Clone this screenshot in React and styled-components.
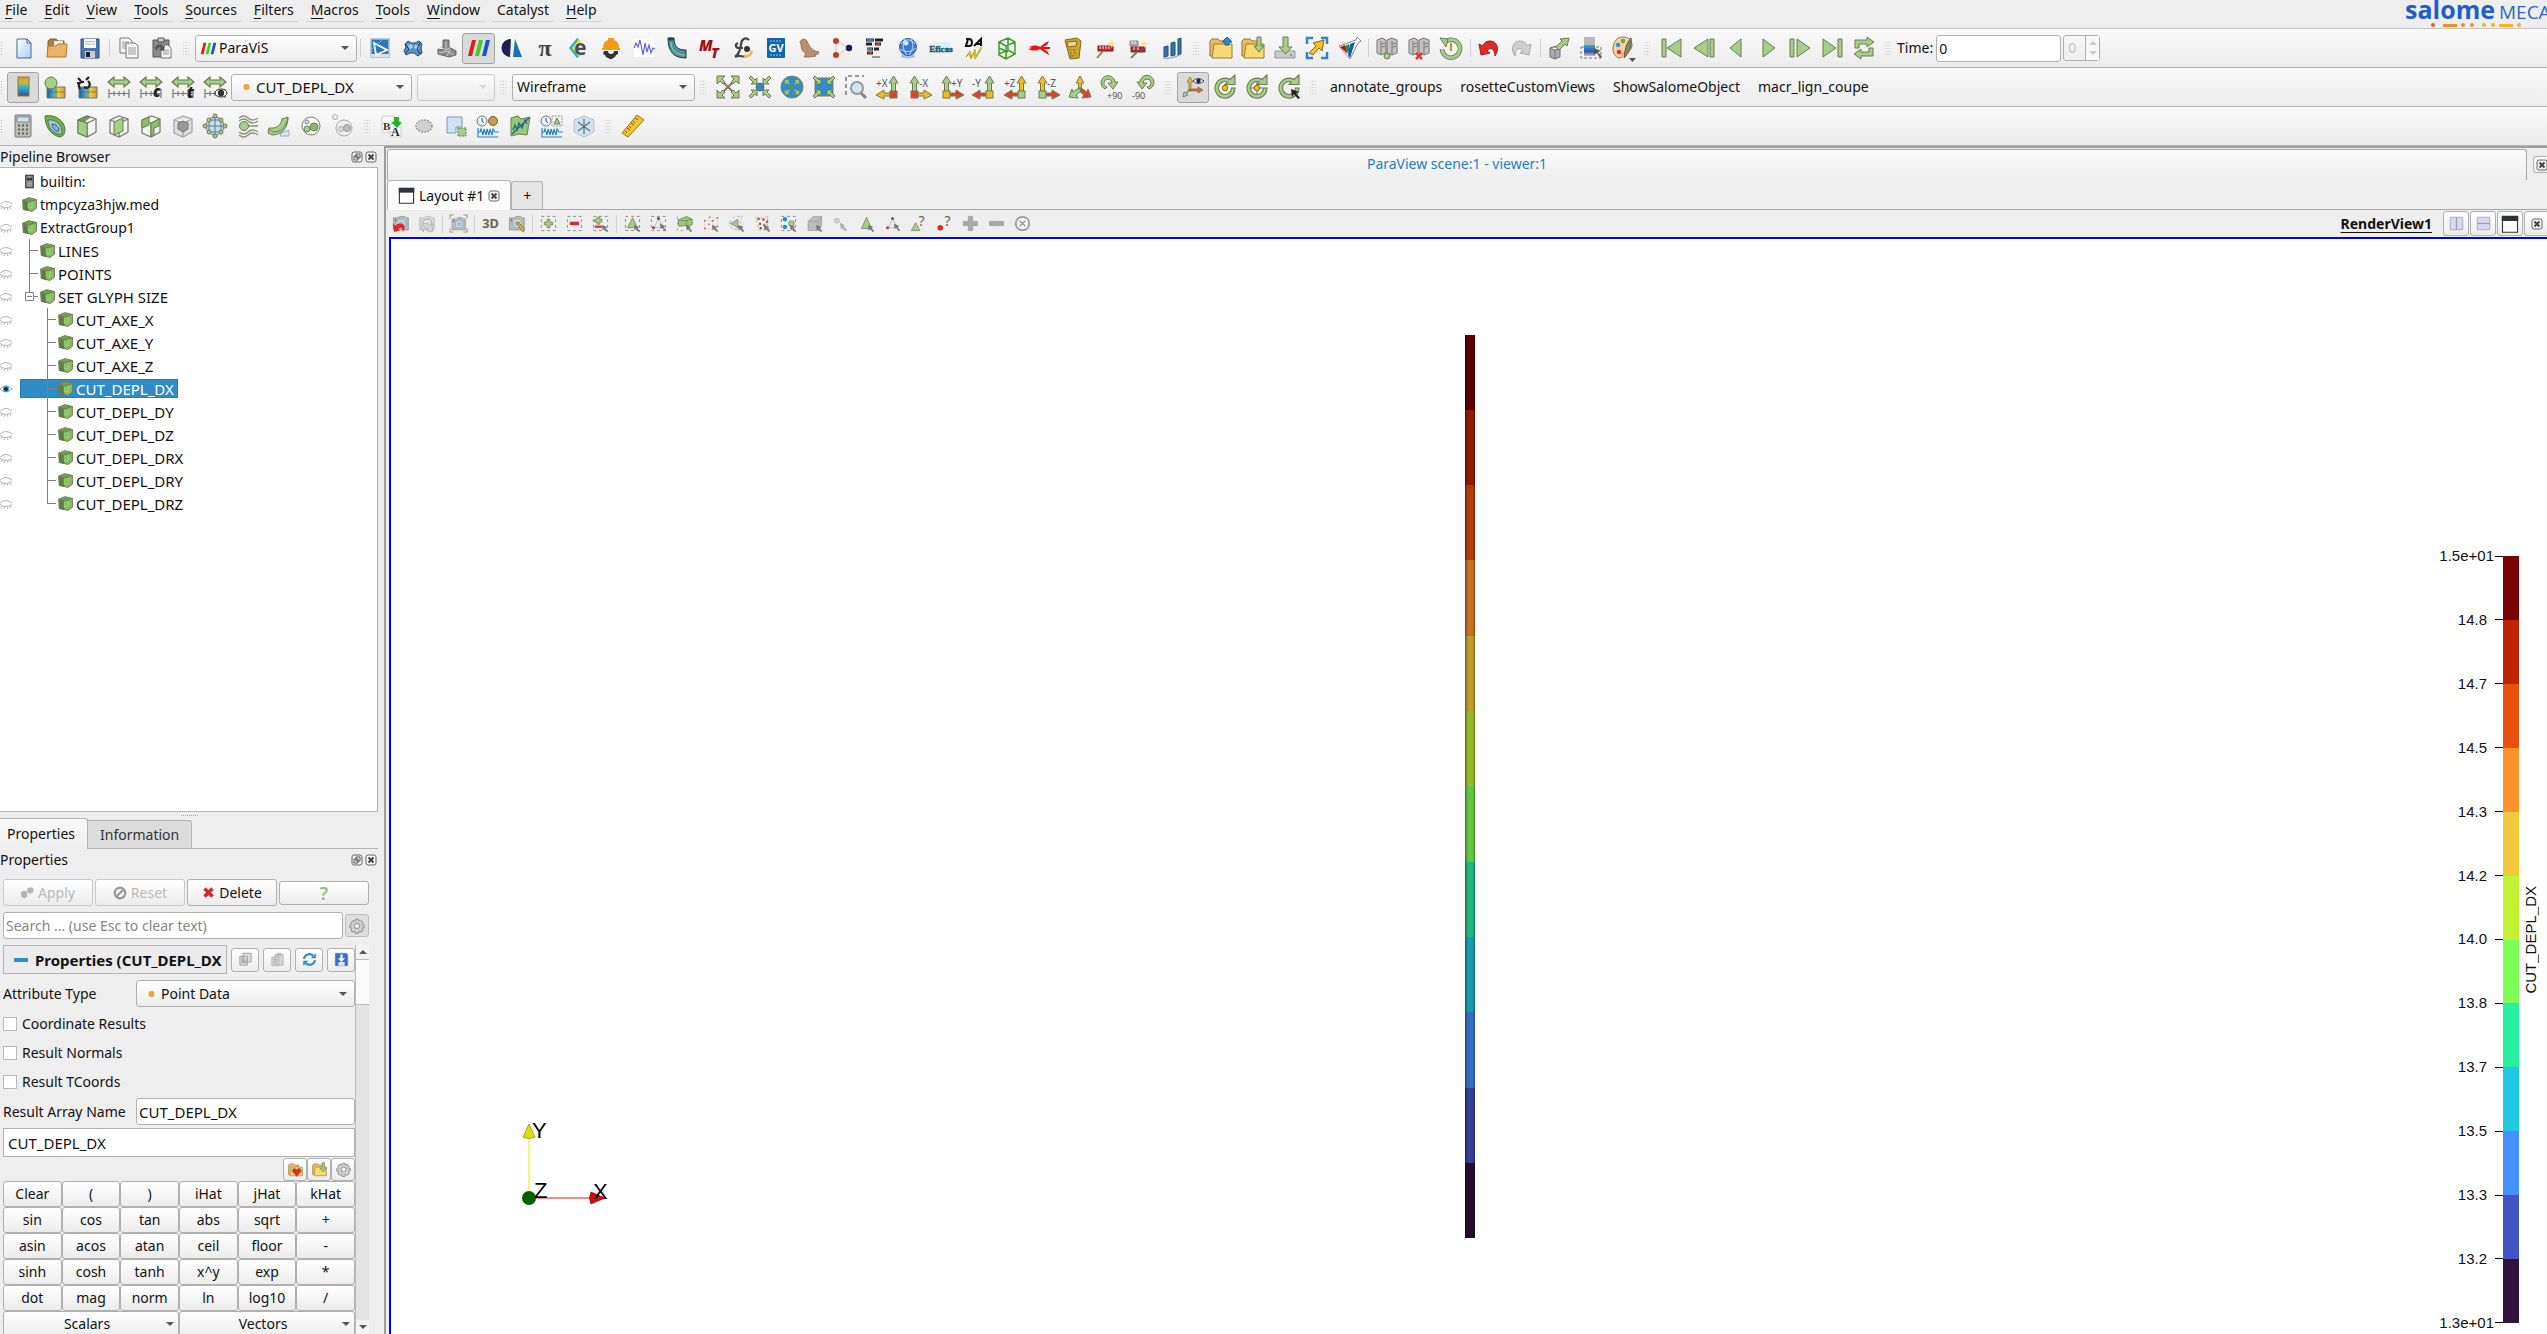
import { useState } from "react"
import styled, { createGlobalStyle, css } from "styled-components"

const GREEN = "#a3cf87"
const EDGE = "#6f7a55"
const FONT = '"Noto Sans", "Open Sans", sans-serif'

const GlobalStyle = createGlobalStyle`
  * {
    box-sizing: border-box;
  }

  body {
    margin: 0;
    background: #eeeeee;
    color: #111111;
    font: 14px/20px ${FONT};
  }

  button, input, select {
    font: inherit;
    color: inherit;
    margin: 0;
  }
`

/* ---------- drawings ---------- */

const Svg = styled.svg`
  display: block;
  flex: none;
  overflow: visible;
`

const Defs = styled.svg`
  position: absolute;
  width: 0;
  height: 0;
`

const Dashes = () => <rect x="2" y="2" width="20" height="20" fill="none" stroke="#8c8c8c" strokeWidth="1.4" strokeDasharray="4 4" />
const Pointer = () => <path d="M14 14l8 3-3 1 4 5-2 1-4-4-2 2z" fill="#777" />
const Folder = () => (
  <>
    <path d="M1 5l2-2h6l2 2h6v15H1z" fill="#eebb62" stroke="#94703a" />
    <path d="M5 8h18v14H3z" fill="#f5d971" stroke="#94803a" />
  </>
)
const Camera = ({ grey }) => (
  <>
    <path d="M2 4h7l2-2h7l2 2h3v17H2z" fill={grey ? "#d6d6d6" : "#b9bcbc"} stroke={grey ? "#bbb" : "#858989"} />
    <circle cx="13" cy="12" r="6" fill="#eee" stroke="#8f9494" />
    <circle cx="13" cy="12" r="4" fill={grey ? "#e2e2e2" : "#8fc6e8"} />
    <rect x="4" y="6" width="2" height="3" fill={grey ? "#ccc" : "#d8443c"} />
  </>
)
const Servers = () => (
  <>
    <path d="M2 4l5-2 4 2v13l-5 2-4-2z" fill="#c6c0c0" stroke="#777" />
    <path d="M12 4l5-2 5 2v13l-5 2-5-2z" fill="#c6c0c0" stroke="#777" />
    <path d="M6 5v13M17 5v13M7 8l3-1M7 11l3-1M18 8l3-1M18 11l3-1" stroke="#777" fill="none" />
  </>
)
const Wire = ({ children, grey }) => (
  <>
    <path d="M3 6l9-4 9 3v13l-9 5-9-4zM3 6l9 3 9-4M12 9v14" fill={grey ? "#ddd" : "none"} stroke={grey ? "#aaa" : "#7b8268"} strokeWidth="1.3" />
    {children}
  </>
)
const RangeBase = ({ children }) => (
  <>
    <path d="M1 7l6-5v3h10V2l6 5-6 5V9H7v3z" fill={GREEN} stroke={EDGE} strokeWidth="1.2" />
    <path d="M2 14v9M22 14v9M7 16v5M12 16v5M17 16v5M2 18.5h20" stroke="#777" strokeWidth="1.2" fill="none" />
    {children}
  </>
)
const Corners = ({ out }) => (
  <>
    {out && <path d="M4 4l16 16M20 4L4 20" stroke="#7c7a60" strokeWidth="2" />}
    <path
      d={out
        ? "M1 1h8L6 4l3 3-2 2-3-3-3 3zM23 1v8l-3-3-3 3-2-2 3-3-3-3zM1 23v-8l3 3 3-3 2 2-3 3 3 3zM23 23h-8l3-3-3-3 2-2 3 3 3-3z"
        : "M9 9H3l2-2-4-4 2-2 4 4 2-2zM15 9V3l2 2 4-4 2 2-4 4 2 2zM9 15v6l-2-2-4 4-2-2 4-4-2-2zM15 15h6l-2 2 4 4-2 2-4-4-2 2z"}
      fill={GREEN}
      stroke={EDGE}
    />
  </>
)
const Clock = () => (
  <>
    <circle cx="6" cy="7" r="5" fill="#e7f0f8" stroke="#6f7a80" />
    <path d="M6 4v3l2 2" stroke="#555" fill="none" />
  </>
)
const Wave = () => <path d="M2 18h2l1-3 2 6 1-6 2 6 1-6 2 6 1-6 2 6 1-6 2 3h4M2 14v9h20" fill="none" stroke="#2385c6" strokeWidth="1.2" />
const Turn = ({ children }) => (
  <>
    <path d="M17 4.5A10 10 0 1 0 22 13h-3.5A6.5 6.5 0 1 1 14.5 7L12 9.5h10V0z" fill={GREEN} stroke={EDGE} strokeWidth="1.1" />
    {children}
  </>
)

const AxisGlyph = ({ label, up, side, block, flip }) => (
  <>
    <g transform={flip ? "translate(24 0) scale(-1 1)" : undefined}>
      <path d="M15.5 17V8H13l4.500-7L22 8h-2.500v9z" fill={up} stroke={EDGE} />
      <path d="M15 18H8v-3l-8 5 8 4v-3h7z" fill={side} stroke={EDGE} />
      <rect x="14" y="16" width="7" height="7" fill={block} stroke={EDGE} />
    </g>
    <text x={flip ? 11 : 0} y="12" fontSize="10" fill="#555">{label}</text>
  </>
)
const AxisParts = { g: GREEN, y: "#f3bc1c", r: "#e23f2c" }

const ParaBars = () => (
  <>
    <path d="M5 4h4L5 20H1z" fill="#e11d1d" />
    <path d="M12 4h4l-4 16H8z" fill="#3bd21c" />
    <path d="M19 4h4l-4 16h-4z" fill="#1c52d8" />
  </>
)
const ColorMap = () => (
  <>
    <path d="M4 12h18v11H4z" fill="url(#jet)" stroke="#777" />
    <path d="M13 12v11M4 17h18" stroke="#555" fill="none" opacity=".5" />
  </>
)
const Molecule = ({ box }) => (
  <>
    {box && <Dashes />}
    <path d="M12 5L6 18M12 5l7 13M6 18h12" stroke="#aaa" fill="none" />
    <circle cx="12" cy="5" r="2.200" fill="#a34b34" />
    <circle cx="5" cy="18" r="2.200" fill="#a34b34" />
    <path d="M14 12l8 4-3 1 4 5-2 1-4-5-2 2z" fill="#777" />
  </>
)

const glyphs = {
  page: <path d="M5 3h10l4 4v15H5zM15 3v4h4" fill="url(#paper)" stroke="#4a6488" />,
  open: (
    <>
      <path d="M3 5l2-2h6l2 2h6v15H3z" fill="#a67c42" stroke="#85602e" />
      <path d="M9 5h9v7H9z" fill="#eee" />
      <path d="M3 10h8l2-2h9l-1 13H2z" fill="#e9b264" stroke="#a97a36" />
    </>
  ),
  save: (
    <>
      <path d="M3 3h18v19H3z" fill="#4577ad" stroke="#284d78" />
      <path d="M6 3h12v9H6z" fill="#f7f7f7" />
      <path d="M7 5.500h10M7 8h10" stroke="#bbb" />
      <path d="M7 15h10v7H7z" fill="#c9cdd2" />
      <path d="M8 16h4v5H8z" fill="#222" />
    </>
  ),
  copy: (
    <>
      <path d="M3 2h9l3 3v12H3z" fill="#f6f6f6" stroke="#777" />
      <path d="M5 6h7M5 8h7M5 10h7M5 12h7" stroke="#999" />
      <path d="M9 7h9l3 3v12H9z" fill="#f6f6f6" stroke="#777" />
      <path d="M11 12h8M11 14h8M11 16h8M11 18h8" stroke="#999" />
    </>
  ),
  paste: (
    <>
      <path d="M3 4h16v17H3z" fill="#8b8b85" stroke="#555" />
      <path d="M8 2h6v4H8z" fill="#ccc" stroke="#555" />
      <path d="M11 9h7l3 3v10H11z" fill="#f6f6f6" stroke="#777" />
      <path d="M13 14h6M13 16h6M13 18h6" stroke="#999" />
      <path d="M5 12c1-4 6-5 8-2l2-1-1 6-5-1 2-2c-2-2-4 0-4 3z" fill="#555" />
    </>
  ),
  shaper: (
    <>
      <rect x="3" y="3" width="18" height="18" fill="#2d77b5" stroke="#a8bccd" strokeWidth="1.5" />
      <path d="M3 18h18v3H3z" fill="#d8e2ea" />
      <path d="M6 7l13 7-11 5z" fill="none" stroke="#fff" strokeWidth="1.8" />
      <path d="M4 13L14 4" stroke="#7fb3dc" fill="none" />
    </>
  ),
  geom: (
    <>
      <path d="M4 8l3-3 3 2h4l4-2 3 3-1 4 1 5-4 3-4-3H9l-4 2-2-4 2-4z" fill="#5a8fc0" stroke="#29486b" />
      <path d="M7 9l4-1 1 4-4 1zM14 9l4 1-1 4-4-2z" fill="#9fd0f0" />
      <path d="M4 8l4 5-3 4M19 7l-3 6 3 5" stroke="#1f3550" fill="none" />
    </>
  ),
  mesh: (
    <>
      <path d="M9 4h6v7l7 4v4l-7 2-11-3v-5l5 1z" fill="#888" stroke="#666" />
      <path d="M6 11l6 3 5-3M12 5v8M5 17l8-2 7 4M16 13l-3 7" stroke="#ccc" fill="none" />
    </>
  ),
  bars: <ParaBars />,
  sigma: (
    <>
      <path d="M11 3a9 9 0 1 0-1 18z" fill="#221d52" />
      <path d="M15 3l7 18h-9z" fill="#1d70b7" />
    </>
  ),
  pi: <text x="12" y="20" textAnchor="middle" fontSize="24" fontWeight="700" fontFamily="Liberation Serif" fill="#3f463f">π</text>,
  eos: (
    <>
      <path d="M11 2L3 12l8 10 2-1-5-9 5-9z" fill="#1ab0e0" />
      <path d="M13 3L6 12l7 9 2-2-5-7 5-7z" fill="#f6dc20" />
      <text x="8" y="19" fontSize="21" fontWeight="700" fill="#4d4d4d">e</text>
    </>
  ),
  helmet: (
    <>
      <path d="M4 12a8 8 0 0 1 5-8V2h6v2a8 8 0 0 1 5 8h1v2H3v-2z" fill="#f49b15" />
      <path d="M5 15h4a3 3 0 0 0 6 0h4v3l-2 1-1 2-2 1-1 1h-2l-2-1-2-1-1-2-2-1z" fill="#333" />
    </>
  ),
  signal: (
    <>
      <rect x="2" y="3" width="20" height="18" fill="#fff" />
      <path d="M2 12l2-5 2 4 2-7 3 15 2-12 2 9 2-7 2 8 2-5 2 1" fill="none" stroke="#6463e0" strokeWidth="1.2" />
    </>
  ),
  pipe: (
    <>
      <path d="M3 2h6c0 9 4 12 12 12v8C9 22 3 16 3 2z" fill="#4f9292" stroke="#234" />
      <ellipse cx="6" cy="3" rx="3" ry="1.500" fill="#234a4a" />
      <path d="M6 6c0 8 5 13 14 13" stroke="#91cccb" fill="none" />
    </>
  ),
  mt: (
    <>
      <text x="1" y="15" fontSize="15" fontWeight="900" fontStyle="italic" fill="#a80d12">M</text>
      <text x="13" y="22" fontSize="14" fontWeight="900" fontStyle="italic" fill="#a80d12">T</text>
    </>
  ),
  lx: (
    <>
      <path d="M18 4c-4-4-8 0-8 5-1 6-2 9-6 12 5-3 8 1 11-1M12 12H8c-4 0-4-4-1-5" fill="none" stroke="#444" strokeWidth="2.2" />
      <circle cx="16" cy="13" r="3" fill="#333" />
      <path d="M13 20c4 1 7-1 8-5" stroke="#f0b64e" strokeWidth="2.500" fill="none" />
    </>
  ),
  gv: (
    <>
      <rect x="3" y="2" width="18" height="20" rx="1" fill="#1065b1" />
      <path d="M6 5h12M6 19h12" stroke="#9cc3e4" strokeDasharray="2 1" />
      <text x="12" y="16" textAnchor="middle" fontSize="11" fontWeight="700" fill="#fff">GV</text>
    </>
  ),
  seal: <path d="M3 6c1-3 5-4 7-1 1 4 4 8 8 10l4 1-1 2-4 1 2 1-7 1H7l2-3c-4-3-5-6-5-10z" fill="#b8906f" stroke="#9b7658" />,
  nodes: (
    <>
      <path d="M6 4l12 8L6 20z" fill="none" stroke="#e0bdb8" />
      <circle cx="6" cy="5" r="3" fill="#c63a2a" />
      <circle cx="6" cy="19" r="3" fill="#c63a2a" />
      <circle cx="19" cy="12" r="3.200" fill="#1d1a5b" />
    </>
  ),
  blocks: (
    <>
      <path d="M3 4h8M12 4h8M3 8h6M12 8h6M4 13h6M11 13h5M4 17h6" stroke="#222" strokeWidth="3.2" />
      <path d="M4 4h6M4 13h5" stroke="#4a9fda" strokeWidth="1.500" />
      <path d="M13 8h4M5 17h4" stroke="#e24040" strokeWidth="1.500" />
      <path d="M9 21h8" stroke="#999" strokeWidth="2" />
    </>
  ),
  globe: (
    <>
      <ellipse cx="12" cy="20" rx="7" ry="2.500" fill="#a9c1e6" />
      <circle cx="12" cy="11" r="8.500" fill="#3c78d6" stroke="#3159a6" />
      <path d="M5 8c5-6 10-5 14 0M4 13c6 4 11 3 16-1M9 3c-3 6-2 11 2 16M15 3c3 6 2 11-2 16" stroke="#c5dcfa" fill="none" />
      <circle cx="10" cy="7" r="2.500" fill="#d9e9fd" />
    </>
  ),
  eficas: (
    <>
      <path d="M4 6h17v12H4z" fill="#d3eef2" opacity=".7" />
      <text x="12" y="16" textAnchor="middle" fontSize="9" fontFamily="Liberation Serif" fontWeight="700" fill="#1f5365" stroke="#1f5365" strokeWidth=".4">Eficas</text>
    </>
  ),
  da: (
    <>
      <path d="M4 3h3c4 0 4 7 0 7H4l2-7M12 10l7-7v7M13 8h6" fill="none" stroke="#111" strokeWidth="2" />
      <path d="M4 21l4-6 1 6 4-8 1 7 5-9v3l-6 9-1-6-3 6-2-5z" fill="#f2e30c" stroke="#997f00" strokeWidth=".6" />
    </>
  ),
  greenCube: <path d="M4 6l9-4 7 4v12l-9 5-7-4zM4 6l7 4 9-4M11 10v13M4 18l9-4 7 4M13 2v12M4 12l9 4" fill="none" stroke="#3f9c24" strokeWidth="1.5" />,
  lobster: <path d="M1 11c5-2 8-2 11 0l5-4 4-2-2 4-4 2h7v2h-6l4 3 1 3-5-3-4-3c-4 2-7 2-12 0l4-1z" fill="#ef1212" />,
  phone: (
    <>
      <path d="M4 4l12-2 4 3-2 17-9 1z" fill="#c9a62e" stroke="#80681a" />
      <path d="M6 6l10-1-1 5-8 1zM8 14h2M12 14h2M9 17h2M13 17h2M9 20h4" fill="#efd989" stroke="#80681a" />
    </>
  ),
  beam: (
    <>
      <path d="M4 10h15v5H4z" fill="#c8222a" stroke="#8a1015" />
      <path d="M6 10v3M9 10v3M12 10v3M15 10v3" stroke="#eee" />
      <path d="M3 22l6-7" stroke="#668a4a" strokeWidth="1.800" />
      <path d="M17 3l1 3 4 1-3 2-1 3-2-3-3-1 3-2z" fill="#f9e39b" />
    </>
  ),
  beams: (
    <>
      <path d="M3 5h8v5H3z" fill="#aaa" stroke="#888" />
      <path d="M4 11h14v5H4z" fill="#9e3438" stroke="#6c3030" />
      <path d="M5 5v3M8 5v3M7 11v3M11 11v3" stroke="#eee" />
      <path d="M4 22l6-6" stroke="#668a4a" strokeWidth="1.800" />
      <path d="M17 3l1 3 4 1-3 2-1 3-2-3-3-1 3-2z" fill="#f9e39b" />
    </>
  ),
  steps: (
    <>
      <path d="M4 11l4-1v10l-4 1zM11 7l4-1v13l-4 1zM18 3l3-1v16l-3 1z" fill="#2f74ae" stroke="#1c4f80" />
      <path d="M3 22c7 1 13-1 18-4" stroke="#88a" fill="none" />
    </>
  ),
  load: <><Folder /><path d="M16 9V6h-3l5-5 5 5h-3v3z" fill="#2c8cc9" stroke="#1d5f8c" /></>,
  saveState: <><Folder /><path d="M16 1h4v9h3l-5 6-5-6h3z" fill={GREEN} stroke={EDGE} /></>,
  download: (
    <>
      <path d="M2 15h20v7H2z" fill="#c9c9c9" stroke="#999" />
      <path d="M17 19h2" stroke="#666" />
      <path d="M10 1h5v10h4l-6.500 7L6 11h4z" fill={GREEN} stroke={EDGE} />
    </>
  ),
  capture: (
    <>
      <path d="M2 8V2h6M16 2h6v6M22 16v6h-6M8 22H2v-6" fill="none" stroke="#2d86c2" strokeWidth="2.500" />
      <path d="M4 17l7-7-3-3 11-3-2 11-3-3-6 7z" fill="#f6c01a" stroke="#7a6a30" />
    </>
  ),
  flask: (
    <>
      <path d="M2 10L19 4l1-3 4 4-3 2-8 16z" fill="#fff" stroke="#888" />
      <path d="M3 11l5-2 3 9z" fill="#a51c2a" />
      <path d="M8 10l4-2 1 10-3-3z" fill="#2d8b46" />
      <path d="M13 8l5-2-5 16-2-3z" fill="#1b5aa3" />
    </>
  ),
  connect: <><Servers /><circle cx="12" cy="20" r="3" fill={GREEN} stroke={EDGE} /></>,
  disconnect: <><Servers /><path d="M9 17l6 6M15 17l-6 6" stroke="#d83b35" strokeWidth="2.500" /></>,
  history: (
    <>
      <path d="M5 7a9 9 0 1 1-2 6" fill="none" stroke={EDGE} strokeWidth="4.500" />
      <path d="M5 7a9 9 0 1 1-2 6" fill="none" stroke={GREEN} strokeWidth="2.800" />
      <path d="M1 2l8 1-2 8z" fill={GREEN} stroke={EDGE} />
      <path d="M12 7v8" stroke="#c98e18" strokeWidth="2" />
    </>
  ),
  undo: <path d="M2 8l2 11 9-2-3-2c3-5 8-2 8 5 5-7 2-15-5-15-4 0-6 2-7 5z" fill="#e32828" stroke="#a11c1c" />,
  redo: <path d="M22 8l-2 11-9-2 3-2c-3-5-8-2-8 5-5-7-2-15 5-15 4 0 6 2 7 5z" fill="#d0d0d0" stroke="#a9a9a9" />,
  extract: (
    <>
      <path d="M3 12l6-2 4 2v9l-5 2-5-2zM3 12l5 2 5-2M8 14v9" fill="#aaa" stroke="#777" />
      <path d="M9 11l6-6-2-2 9-1-2 8-2-2-6 6z" fill={GREEN} stroke={EDGE} />
    </>
  ),
  gradientPick: (
    <>
      <path d="M5 1h11v8H5z" fill="#b8b8b8" />
      <path d="M5 9h11v11H5z" fill="url(#sea)" />
      <path d="M2 11h20v11H2z" fill="none" stroke="#777" strokeDasharray="3 2" />
      <path d="M15 12l7 3-3 1 4 5-2 1-3-5-3 2z" fill="#555" />
    </>
  ),
  palette: (
    <>
      <path d="M12 1C5 1 2 7 2 13s4 9 7 9 2-5 5-6 7-1 7-7-4-8-9-8z" fill="#f3d2a0" stroke="#8f7a55" />
      <circle cx="7" cy="9" r="2.300" fill="#3b8fd0" />
      <circle cx="12" cy="5" r="2.300" fill="#5eae3b" />
      <circle cx="8" cy="16" r="2.300" fill="#dd2e2e" />
      <path d="M20 2c1 7-1 14-7 20 1-8 2-14 7-20z" fill="#8d8569" stroke="#5d5740" />
      <path d="M18 22h7l-3.500 4z" fill="#555" />
    </>
  ),
  first: <path d="M2 3h4v18H2zM21 3v18L7 12z" fill={GREEN} stroke={EDGE} />,
  prev: <path d="M18 3h4v18h-4zM16 3v18L2 12z" fill={GREEN} stroke={EDGE} />,
  back: <path d="M17 3v18L6 12z" fill={GREEN} stroke={EDGE} />,
  play: <path d="M7 3v18l12-9z" fill={GREEN} stroke={EDGE} />,
  next: <path d="M2 3h4v18H2zM9 3v18l13-9z" fill={GREEN} stroke={EDGE} />,
  last: <path d="M18 3h4v18h-4zM3 3v18l13-9z" fill={GREEN} stroke={EDGE} />,
  loop: <path d="M3 12V4h12V1l7 5-7 5V8H7v4zM21 12v8H9v3l-7-5 7-5v3h8v-4z" fill={GREEN} stroke={EDGE} />,

  legend: <rect x="7" y="2" width="11" height="19" fill="url(#legendMap)" stroke="#8a7b3c" />,
  editMap: <><ColorMap /><circle cx="8" cy="8" r="6" fill={GREEN} stroke={EDGE} /></>,
  unlink: <><ColorMap /><path d="M5 14c-3-5 0-8 4-7M9 12c4 3 8-2 4-6M11 5l3-3M3 3l3 3M2 8h3" fill="none" stroke="#222" strokeWidth="2.200" /></>,
  range: <RangeBase />,
  rangeC: <RangeBase><text x="14" y="22" fontSize="15" fontWeight="900" fontStyle="italic" fill="#222">c</text></RangeBase>,
  rangeT: <RangeBase><text x="16" y="23" fontSize="15" fontWeight="900" fontStyle="italic" fill="#222">t</text></RangeBase>,
  rangeEye: <RangeBase><ellipse cx="18" cy="18" rx="6" ry="4" fill="#fff" stroke="#222" /><circle cx="18" cy="18" r="3.200" fill="#333" /></RangeBase>,
  fit: <Corners out />,
  fitData: <><Corners /><circle cx="12" cy="12" r="4" fill="#2c8cc9" stroke="#666" /></>,
  closest: <><circle cx="12" cy="12" r="11" fill="#2a8fd0" stroke="#7a8263" /><g transform="translate(4 4) scale(.67)"><Corners out /></g></>,
  closestData: <><rect x="3" y="3" width="18" height="18" rx="3" fill="#2a8fd0" stroke="#7a8263" /><Corners /></>,
  zoomBox: (
    <>
      <path d="M2 20V1h18" fill="none" stroke="#777" strokeWidth="1.500" strokeDasharray="4 3" />
      <circle cx="13" cy="13" r="6" fill="#cfe6f7" stroke="#999" strokeWidth="2" />
      <path d="M17 18l5 5" stroke="#888" strokeWidth="3" />
    </>
  ),
  plusX: <AxisGlyph label="+X" up={AxisParts.g} side={AxisParts.y} block={AxisParts.r} />,
  minusX: <AxisGlyph label="-X" up={AxisParts.g} side={AxisParts.y} block={AxisParts.r} flip />,
  plusY: <AxisGlyph label="+Y" up={AxisParts.g} side={AxisParts.r} block={AxisParts.y} flip />,
  minusY: <AxisGlyph label="-Y" up={AxisParts.g} side={AxisParts.r} block={AxisParts.y} />,
  plusZ: <AxisGlyph label="+Z" up={AxisParts.y} side={AxisParts.r} block={AxisParts.g} />,
  minusZ: <AxisGlyph label="-Z" up={AxisParts.y} side={AxisParts.r} block={AxisParts.g} flip />,
  iso: (
    <>
      <path d="M10.500 13V8H8l4-7 4 7h-2.500v5z" fill="#f3bc1c" stroke={EDGE} />
      <path d="M13 13l6 4 1-3 3 8-9 1 2-3-5-4z" fill="#e23f2c" stroke={EDGE} />
      <path d="M11 13l-6 4-1-3-3 8 9 1-2-3 5-4z" fill={GREEN} stroke={EDGE} />
    </>
  ),
  rotPlus: (
    <>
      <path d="M5 14A7 7 0 1 1 15 7h3l-5 7-5-6h4a4 4 0 1 0-5 4z" fill={GREEN} stroke={EDGE} />
      <text x="7" y="24" fontSize="9" fill="#555">+90</text>
    </>
  ),
  rotMinus: (
    <>
      <path d="M17 14A7 7 0 1 0 8 7H5l5 7 5-6h-4a4 4 0 1 1 4 4z" fill={GREEN} stroke={EDGE} />
      <text x="0" y="24" fontSize="9" fill="#555">-90</text>
    </>
  ),
  axesEye: (
    <>
      <path d="M8 16V7H6l3-5 3 5h-2v9z" fill="#f3bc1c" stroke={EDGE} strokeWidth=".8" />
      <path d="M9 14h8v-2l5 3-5 3v-2H9z" fill="#ee5b36" stroke={EDGE} strokeWidth=".8" />
      <path d="M9 15l-3 3 1 2-5 2 1-5 2 1 3-4z" fill={GREEN} stroke={EDGE} strokeWidth=".8" />
      <path d="M12 6q5-5 11 0-6 5-11 0z" fill="#fff" stroke="#444" />
      <circle cx="17.500" cy="6" r="2.200" fill="#23205e" />
    </>
  ),
  center: <Turn><circle cx="12" cy="13" r="2.800" fill="#f3bc1c" stroke="#866b1f" /></Turn>,
  resetCenter: <Turn><path d="M12 7v12M6 13h12" stroke="#666" /><circle cx="12" cy="13" r="2.800" fill="#f3bc1c" stroke="#866b1f" /></Turn>,
  pickCenter: <Turn><path d="M14 14l8 3-3 1 4 5-2 1-4-5-2 3z" fill="#222" /></Turn>,

  calc: (
    <>
      <rect x="4" y="1" width="16" height="22" rx="1" fill="#bdbdbd" stroke="#777" />
      <rect x="6" y="3" width="12" height="5" fill="#cfe3f3" stroke="#888" />
      <path d="M7 11.500h2M11 11.500h2M15 11.500h2M7 15.500h2M11 15.500h2M15 15.500h2M7 19.500h2M11 19.500h2M15 19.500h2" stroke="#63633f" strokeWidth="2.200" />
    </>
  ),
  contour: (
    <>
      <path d="M2 2c9-2 19 4 20 13 0 6-3 8-5 8C7 21 2 12 2 2z" fill="#6db33f" stroke="#4f7a35" />
      <path d="M5 6c7-1 13 4 14 10 0 4-2 5-4 4C9 18 5 13 5 6z" fill="#a9c4d6" stroke="#567" />
      <path d="M9 10c4 0 7 3 7 6s-6 1-7-6z" fill="#7fb4dd" stroke="#456" />
    </>
  ),
  clip: <Wire><path d="M3 6l9 3v14l-9-4z" fill={GREEN} stroke={EDGE} /><path d="M3 6l9-4 3 1-6 5z" fill="#6da04f" stroke={EDGE} /></Wire>,
  slice: <Wire><path d="M7 8l9-4v13l-9 4z" fill={GREEN} stroke={EDGE} /></Wire>,
  threshold: <Wire><path d="M3 6l7-3v8l-7 3zM12 9l8-4v7l-5 2v6l-3 2z" fill="#8bc068" stroke={EDGE} /></Wire>,
  subset: <Wire grey><path d="M7 9l5-2 5 2v6l-5 3-5-3z" fill="#999" stroke="#777" /></Wire>,
  glyph: (
    <>
      <circle cx="12" cy="12" r="9" fill="#c6ddf1" stroke="#5f7890" />
      <path d="M2 12h20M12 2v20M6 6h12v12H6z" fill="none" stroke="#5f7890" />
      {[[12, 2], [12, 22], [2, 12], [22, 12]].map(([x, y]) => <circle key={`${x}-${y}`} cx={x} cy={y} r="2" fill={GREEN} stroke={EDGE} />)}
      {[[6, 6], [18, 6], [6, 18], [18, 18]].map(([x, y]) => <circle key={`${x}-${y}`} cx={x} cy={y} r="2" fill={GREEN} stroke={EDGE} />)}
    </>
  ),
  stream: (
    <>
      <path d="M4 4q5-4 9 0t10 0M4 7q5-4 9 0t10 0M12 12h11M4 18q5 4 9 0t10 0M4 21q5 4 9 0t10 0" fill="none" stroke="#8a9175" strokeWidth="1.300" />
      <circle cx="9" cy="12" r="4.500" fill={GREEN} stroke={EDGE} />
    </>
  ),
  warp: (
    <>
      <path d="M14 19l8-3v6h-9z" fill="#d6e7f2" stroke="#9bb3c2" />
      <path d="M2 14c8 1 12-3 13-9l6-2c0 11-6 18-16 18l-4-2z" fill={GREEN} stroke={EDGE} />
      <path d="M2 15l4 3c9 0 13-5 15-14" fill="none" stroke={EDGE} />
    </>
  ),
  group: (
    <>
      <circle cx="12" cy="12" r="9" fill="#fafafa" stroke="#7b8268" />
      <circle cx="8" cy="8" r="2" fill="#ddd" stroke="#888" />
      <circle cx="8" cy="15" r="3" fill={GREEN} stroke={EDGE} />
      <circle cx="15" cy="13" r="4" fill="#85bd60" stroke={EDGE} />
    </>
  ),
  extractLevel: (
    <>
      <circle cx="13" cy="14" r="8" fill="#eee" stroke="#aaa" />
      <circle cx="4" cy="3" r="2.500" fill="#f7f7f7" stroke="#aaa" />
      <circle cx="10" cy="15" r="2.500" fill="#ddd" stroke="#aaa" />
      <circle cx="16" cy="14" r="3.500" fill="#bbb" stroke="#999" />
    </>
  ),
  translate: (
    <>
      <path d="M2 2h12v16H2zM10 10h11v13H10z" fill="#fff" stroke="#ccc" />
      <text x="3" y="16" fontSize="11" fontFamily="Liberation Serif" fontWeight="700" fill="#333">B</text>
      <text x="11" y="22" fontSize="12" fontFamily="Liberation Serif" fontWeight="700" fill="#222">A</text>
      <path d="M14 3h5v5h3l-5 6-6-6h3z" fill="#23b51e" />
    </>
  ),
  oval: <ellipse cx="12" cy="12" rx="8" ry="6" fill="#cfcfcf" stroke="#888" strokeDasharray="1.500 1.500" strokeWidth="1.500" />,
  squares: (
    <>
      <path d="M3 3h15v10h-6v6H3z" fill="#d0e1f1" stroke="#7f99ae" />
      <rect x="14" y="14" width="8" height="8" fill={GREEN} stroke={EDGE} strokeDasharray="2 1" />
    </>
  ),
  timeBall: <><Clock /><circle cx="17" cy="7" r="4.500" fill="#c29d4a" stroke="#79602a" /><Wave /></>,
  plotLine: (
    <>
      <path d="M3 4l7-2 3 3 9-2-3 18-8-1-8 2z" fill="#93cc73" stroke={EDGE} />
      <path d="M4 20L21 4M5 16l2-5 2 5 2-7 3 5 3-8 2 4" fill="none" stroke="#24648f" strokeWidth="1.300" />
    </>
  ),
  timePick: <><Clock /><rect x="12" y="2" width="10" height="10" fill="none" stroke="#999" strokeDasharray="2 1" /><path d="M17 4l3 6h-6z" fill={GREEN} stroke={EDGE} /><Wave /></>,
  ice: (
    <>
      <path d="M2 6l10-4 10 4v12l-10 5-10-5z" fill="#cfe2f0" stroke="#afc5d6" />
      <path d="M12 5v15M6 8l12 9M18 8L6 17" stroke="#64747f" strokeWidth="1.300" />
    </>
  ),
  ruler: (
    <>
      <path d="M1 19L16 1l7 5L7 23z" fill="#f2c12b" stroke="#957a24" />
      <path d="M4 17l2 2M6 14l3 2M8 12l2 2M10 9l3 2M12 7l2 2M14 4l3 2" stroke="#6d5a1c" />
    </>
  ),

  camUndo: <><Camera /><path d="M1 12l2 12 8-2-2-2c3-4 7-1 6 4 6-6 2-13-4-12-3 0-5 2-6 3z" fill="#e32828" /></>,
  camRedo: <><Camera grey /><path d="M22 12l-2 12-8-2 2-2c-3-4-7-1-6 4-6-6-2-13 4-12 3 0 5 2 6 3z" fill="#d4d4d4" stroke="#aaa" /></>,
  camera: <><path d="M0 5V0h5M19 0h5v5M24 19v5h-5M5 24H0v-5" fill="none" stroke="#999" strokeWidth="1.500" /><g transform="translate(1 2) scale(.9)"><Camera /></g></>,
  threeD: <text x="12" y="18" textAnchor="middle" fontSize="18" fontWeight="700" fill="#6a6750">3D</text>,
  camEdit: <><Camera /><path d="M12 11l3-1 8 10-1 4-3-2z" fill="#e3b12b" stroke="#7b652a" /></>,
  selPlus: <><Dashes /><path d="M10 6h4v4h4v4h-4v4h-4v-4H6v-4h4z" fill={GREEN} stroke={EDGE} /></>,
  selMinus: <><Dashes /><path d="M6 10h12v4H6z" fill="#e62323" stroke="#a33" /></>,
  selToggle: <><Dashes /><path d="M7 3h4v3h3v4h-3v3H7v-3H4V6h3z" fill={GREEN} stroke={EDGE} /><path d="M4 15h10v3H4z" fill="#e62323" /><Pointer /></>,
  selCells: <><Dashes /><path d="M12 4l7 14H5z" fill={GREEN} stroke={EDGE} /><Pointer /></>,
  selPoints: <Molecule box />,
  frustum: <><path d="M2 2v20h12" fill="none" stroke="#8c8c8c" strokeDasharray="4 4" /><path d="M3 7l12-5 8 4v8L4 16z" fill="#96cb76" stroke={EDGE} /><path d="M3 7l12 1 8-2M15 8v7" fill="none" stroke={EDGE} /><Pointer /></>,
  frustumPts: <><path d="M4 8l7-5 11 1v12l-7 4H4zM4 8h11l7-4M15 8v12" fill="none" stroke="#bbb" strokeDasharray="2 2" /><path d="M3 7h2v2H3zM10 2h2v2h-2zM21 3h2v2h-2zM14 7h2v2h-2zM3 18h2v2H3zM21 15h2v2h-2zM9 12h2v2H9z" fill="#df4545" /><Pointer /></>,
  polyCells: <><path d="M2 10L10 2h10l-3 8 4 10H6z" fill="none" stroke="#999" strokeDasharray="4 3" /><path d="M4 12l10-6v12z" fill={GREEN} stroke={EDGE} /><Pointer /></>,
  polyPts: <><path d="M2 4l8 1 10-3-2 10 3 9H7z" fill="none" stroke="#999" strokeDasharray="4 3" /><path d="M5 4h3v3H5zM12 5h3v3h-3zM7 11h3v3H7zM13 13h3v3h-3zM17 8h3v3h-3zM8 17h3v3H8z" fill="#a34b34" /><Pointer /></>,
  selBlock: <><Dashes /><circle cx="7" cy="6" r="3.200" fill="#2c8cc9" /><circle cx="7" cy="17" r="3.200" fill="#2c8cc9" /><circle cx="16" cy="12" r="4" fill={GREEN} stroke={EDGE} /><Pointer /></>,
  greyBox: <><path d="M3 9l7-7h12l-4 7v13H3zM3 9h15l4-7v13l-4 7" fill="#bdbdbd" stroke="#999" /><Pointer /></>,
  hoverPt: <><circle cx="7" cy="8" r="3.500" fill="#d3d3d3" stroke="#aaa" /><path d="M11 11l8 4-3 1 5 5-2 2-5-5-1 3z" fill="#aaa" /></>,
  hoverCell: <><path d="M12 3l7 16H5z" fill={GREEN} stroke={EDGE} /><Pointer /></>,
  hoverPts: <Molecule />,
  askCell: <><path d="M8 11l6 11H2z" fill={GREEN} stroke={EDGE} /><text x="12" y="16" fontSize="20" fill="#6a6750">?</text></>,
  askPt: <><circle cx="6" cy="18" r="4" fill="#e02c20" /><text x="12" y="16" fontSize="20" fill="#6a6750">?</text></>,
  grow: <path d="M9 2h6v7h7v6h-7v7H9v-7H2V9h7z" fill="#a9a9a9" stroke="#999" />,
  shrink: <path d="M2 9h20v6H2z" fill="#a9a9a9" stroke="#999" />,
  clearSel: <><circle cx="12" cy="12" r="9.500" fill="#f6f6f6" stroke="#999" strokeWidth="2.500" /><path d="M8 8l8 8M16 8l-8 8" stroke="#999" strokeWidth="2" /></>,

  cube: (
    <>
      <path d="M1 5L11 1l12 3v14l-7 5L2 20z" fill="#86bf62" stroke="#7d7358" strokeWidth="1.600" />
      <path d="M1 5l10-4 12 3-9 4z" fill="#6f9f52" />
      <path d="M2 6l8 2v14l-8-2z" fill="#5c7c48" />
      <path d="M10 8v9h6V7" fill="none" stroke="#a4db80" strokeWidth="1.300" />
      <path d="M1 5l10 3 12-4" fill="none" stroke="#7d7358" strokeWidth="1.500" />
    </>
  ),
  server: (
    <>
      <rect x="6" y="2" width="12" height="20" fill="#8f8f8f" stroke="#333" strokeWidth="1.800" />
      <path d="M8 5h8v5H8z" fill="#2c2c2c" />
      <path d="M9 6h6" stroke="#fff" />
      <path d="M8 15h8M8 18h8" stroke="#b9b9b9" />
    </>
  ),
  cubes: <path d="M1 11l6-2 4 2v8l-5 3-5-3zM12 5l5-2 5 1v7l-5 3-4-2z" fill="#b4b4b4" stroke="#aaa" />,
  forbid: <><circle cx="12" cy="12" r="9" fill="none" stroke="#999" strokeWidth="4" /><path d="M6 18L18 6" stroke="#999" strokeWidth="4" /></>,
  cross: <path d="M3 7l4-4 5 5 5-5 4 4-5 5 5 5-4 4-5-5-5 5-4-4 5-5z" fill="#e62424" stroke="#b31a1a" />,
  gear: (
    <>
      <path d="M10 2h4l1 3 3-1 3 3-1 3 3 1v3l-3 1 1 3-3 3-3-1-1 3h-4l-1-3-3 1-3-3 1-3-3-1v-3l3-1-1-3 3-3 3 1z" fill="#d2d2d2" stroke="#a0a0a0" strokeWidth="1.800" />
      <circle cx="12" cy="12" r="4" fill="#eee" stroke="#a0a0a0" strokeWidth="1.800" />
    </>
  ),
  copyGrey: <path d="M8 2h13v14H8zM3 7h12v14H3zM5 11h8M5 14h8M5 17h8" fill="#ddd" stroke="#9a9a9a" strokeWidth="1.400" />,
  pasteGrey: <path d="M8 4h13v17H8zM12 2h5v4h-5zM3 8h11v14H3zM5 12h7M5 15h7M5 18h7" fill="#d4d4d4" stroke="#b2b2b2" strokeWidth="1.400" />,
  reload: (
    <>
      <path d="M3 11a9 9 0 0 1 15-5M21 13a9 9 0 0 1-15 5" fill="none" stroke="#2d8dc8" strokeWidth="3.500" />
      <path d="M22 2v8h-8zM2 22v-8h8z" fill="#2d8dc8" />
    </>
  ),
  saveBlue: (
    <>
      <path d="M2 2h18l2 2v18H2z" fill="#3c6fc4" stroke="#7d8797" />
      <path d="M7 16h10v6H7z" fill="#dde6f2" />
      <path d="M10 4h4v6h4l-6 6-6-6h4z" fill="#e8eef8" />
    </>
  ),
  heart: <><Folder /><path d="M14 23l-7-8c-1-5 5-6 7-2 2-4 8-3 7 2z" fill="#e32b20" stroke="#a55" /></>,
  windowBox: <><path d="M2 2h20v21H2z" fill="#fff" stroke="#333" strokeWidth="1.500" /><path d="M1 1h22v7H1z" fill="#30323c" /></>,
  splitH: <><path d="M2 2h20v20H2z" fill="#d5daee" stroke="#a9adb9" strokeWidth="1.500" /><path d="M12 2v20" stroke="#9b9fac" strokeWidth="2" /></>,
  splitV: <><path d="M2 2h20v20H2z" fill="#d5daee" stroke="#a9adb9" strokeWidth="1.500" /><path d="M2 12h20" stroke="#9b9fac" strokeWidth="2" /></>,
  close: <><rect x="2" y="2" width="20" height="20" rx="4" fill="#f6f6f6" stroke="#666" strokeWidth="2" /><path d="M7 7l10 10M17 7L7 17" stroke="#444" strokeWidth="4" /></>,
  float: <><rect x="2" y="2" width="20" height="20" rx="4" fill="#f3f3f3" stroke="#666" strokeWidth="2" /><path d="M10 6h8v8h-8zM6 10h8v8H6z" fill="#f3f3f3" stroke="#555" strokeWidth="2" /></>,
  dot: <rect x="11" y="9" width="6" height="6" rx="1" fill="#f3b01c" stroke="#c08a2c" />,
  eyeOpen: <><path d="M0 12Q12-1 24 12 12 24 0 12z" fill="#fff" stroke="#888" strokeWidth="1.500" /><circle cx="12" cy="12" r="6" fill="#2b92d4" /><circle cx="12" cy="12" r="3.500" fill="#111" /></>,
  eyeShut: <path d="M0 10Q12 0 24 10M0 13Q12 21 24 13M4 16l-2 4M9 18l-1 4M15 18l1 4M20 16l2 4" fill="none" stroke="#999" strokeWidth="1.500" />,
}

function Icon({ name, size = 24 }) {
  return <Svg width={size} height={size} viewBox="0 0 24 24" aria-hidden="true">{glyphs[name]}</Svg>
}

const Gradients = () => (
  <Defs aria-hidden="true">
    <defs>
      <linearGradient id="paper" x2="1" y2="1"><stop stopColor="#fff" /><stop offset="1" stopColor="#a9cdfa" /></linearGradient>
      <linearGradient id="jet"><stop stopColor="#2a55a5" /><stop offset=".35" stopColor="#38aec2" /><stop offset=".65" stopColor="#e8d03d" /><stop offset="1" stopColor="#e88a35" /></linearGradient>
      <linearGradient id="sea" x2="0" y2="1"><stop stopColor="#18b5dd" /><stop offset=".6" stopColor="#3154b5" /><stop offset="1" stopColor="#d8b7c9" /></linearGradient>
      <linearGradient id="legendMap" x2="0" y2="1"><stop stopColor="#dd9c35" /><stop offset=".3" stopColor="#c7b745" /><stop offset=".6" stopColor="#1ab1d5" /><stop offset="1" stopColor="#4b4391" /></linearGradient>
    </defs>
  </Defs>
)

const Triangle = styled.span`
  flex: none;
  border: solid transparent;
  border-width: ${({ $up }) => ($up ? "0 4px 4px" : "4px 4px 0")};
  border-${({ $up }) => ($up ? "bottom" : "top")}-color: ${({ $muted }) => ($muted ? "#cccccc" : "#555555")};
`

/* ---------- shared controls ---------- */

const raised = css`
  border: 1px solid #b0b0b0;
  border-radius: 3px;
  background: linear-gradient(#ffffff, #ececec);
`

const Shell = styled.div`
  display: flex;
  flex-direction: column;
  height: 100vh;
  overflow: hidden;
`

const MenuBar = styled.nav`
  display: flex;
  flex: none;
  gap: 7px;
  height: 29px;
  border-bottom: 1px solid #c6c6c6;
`

const MenuItem = styled.button`
  height: 22px;
  padding: 0 5px 2px;
  border: 0;
  border-bottom: 1px solid #d3d3d3;
  background: none;
  line-height: 19px;

  &::first-letter {
    text-decoration: ${({ $plain }) => ($plain ? "none" : "underline")};
    text-underline-offset: 3px;
  }
`

const Brand = styled.div`
  flex: none;
  height: 28px;
  margin-left: auto;
  margin-right: -8px;
  overflow: hidden;
`

const ToolBar = styled.div`
  display: flex;
  flex: none;
  align-items: center;
  height: 39px;
  border-bottom: 1px solid #b4b4b4;
  background: linear-gradient(#f9f9f9, #ececec);
`

const Handle = styled.span`
  flex: none;
  width: ${({ $edge }) => ($edge ? "7px" : "17px")};
  height: 17px;
  padding: 0 ${({ $edge }) => ($edge ? "4px 0 0" : "6px 0 5px")};
  background: radial-gradient(circle, #b5b5b5 1px, transparent 1px) center / 3px 3px repeat content-box;
`

const Separator = styled.span`
  flex: none;
  width: 1px;
  height: 18px;
  margin: 0 2px 0 3px;
  background: #d2d2d2;
`

const ToolButton = styled.button`
  display: flex;
  flex: none;
  align-items: center;
  justify-content: center;
  width: ${({ $wide }) => ($wide ? "33px" : "32px")};
  height: 31px;
  padding: 0;
  border: 1px solid ${({ $on }) => ($on ? "#a3a3a3" : "transparent")};
  border-radius: 3px;
  background: ${({ $on }) => ($on ? "#dadada" : "none")};
`

const MacroButton = styled.button`
  padding: 0 10px 0 8px;
  border: 0;
  background: none;
`

const SelectBox = styled.div`
  ${raised}
  display: flex;
  flex: ${({ $grow }) => ($grow ? "1" : "none")};
  align-items: center;
  width: ${({ $width }) => $width};
  height: 27px;
  margin-right: ${({ $gap }) => ($gap ? "5px" : "0")};
  padding: 0 7px 0 4px;
  gap: 2px;
  opacity: ${({ $off }) => ($off ? 0.6 : 1)};
  font-size: ${({ $large }) => ($large ? "15px" : "14px")};

  select {
    flex: 1;
    min-width: 0;
    padding: 0;
    border: 0;
    outline: 0;
    appearance: none;
    background: none;
    opacity: 1;
  }
`

const TextInput = styled.input`
  flex: ${({ $width }) => ($width ? "none" : "1")};
  width: ${({ $width }) => $width || "auto"};
  min-width: 0;
  height: ${({ $tall }) => ($tall ? "29px" : "27px")};
  padding: 0 ${({ $tall }) => ($tall ? "4px" : "2px")};
  border: 1px solid #b0b0b0;
  border-radius: ${({ $tall }) => ($tall ? "0" : "3px")};
  background: #ffffff;
  font-size: ${({ $large }) => ($large ? "15px" : "14px")};

  &::placeholder {
    color: #858585;
  }
`

const TimeLabel = styled.label`
  padding-right: 3px;
`

const Spinner = styled.div`
  display: flex;
  width: 37px;
  height: 26px;
  margin-left: 2px;
  border: 1px solid #b0b0b0;
  border-radius: 3px;

  input {
    width: 22px;
    padding: 0 4px;
    border: 0;
    border-right: 1px solid #b0b0b0;
    background: none;
    color: #c4c4c4;
  }

  div {
    display: flex;
    flex: 1;
    flex-direction: column;
    align-items: center;
    justify-content: space-evenly;
    background: #f8f8f8;
  }
`

function Picker({ label, icon, value, width, gap, off, grow, large, id, iconSize = 16 }) {
  return (
    <SelectBox $width={width} $gap={gap} $off={off} $grow={grow} $large={large}>
      {icon && <Icon name={icon} size={iconSize} />}
      <select id={id} aria-label={label} disabled={off} defaultValue={value}>
        <option>{value}</option>
      </select>
      <Triangle $muted={off} />
    </SelectBox>
  )
}

const Tools = ({ names, on, wide }) => names.map((name) => (
  <ToolButton key={name} type="button" aria-label={name} $on={name === on} $wide={wide}>
    <Icon name={name} />
  </ToolButton>
))

/* ---------- left dock ---------- */

const Main = styled.main`
  display: flex;
  flex: 1;
  gap: 6px;
  min-height: 0;
`

const Dock = styled.aside`
  display: flex;
  flex: none;
  flex-direction: column;
  width: 378px;
  min-height: 0;
`

const DockTitle = styled.header`
  display: flex;
  flex: none;
  align-items: center;
  gap: 2px;
  height: 21px;
  padding-right: 1px;

  h2 {
    flex: 1;
    margin: 0;
    font: inherit;
  }
`

const TinyButton = styled.button`
  display: flex;
  align-items: center;
  justify-content: center;
  width: 12px;
  height: 12px;
  padding: 0;
  border: 0;
  background: none;
`

const Tree = styled.ul`
  flex: 1;
  margin: 0;
  padding: 2px 0 0;
  border: solid #b4b4b4;
  border-width: 1px 1px 1px 0;
  background: #ffffff;
  list-style: none;
`

const TreeRow = styled.li`
  display: flex;
  align-items: center;
  height: 23px;
`

const EyeButton = styled.button`
  width: 20px;
  height: 20px;
  padding: 0;
  border: 0;
  background: none;
`

const TreeItem = styled.div`
  display: flex;
  align-items: center;
  height: 19px;
  padding-right: 4px;
  background: ${({ $selected }) => ($selected ? "#308cc6" : "none")};
  box-shadow: ${({ $selected }) => ($selected ? "inset 0 0 0 1px #2a7cb0" : "none")};
  color: ${({ $selected }) => ($selected ? "#ffffff" : "inherit")};
  font-size: ${({ $large }) => ($large ? "15px" : "14px")};
`

const TreeIcon = styled.span`
  display: flex;
  justify-content: center;
  width: 18px;
  margin-right: 2px;
`

const Splitter = styled.div`
  flex: none;
  width: 17px;
  height: 4px;
  margin: 0 auto 2px;
  border-bottom: 1px dotted #aaaaaa;
`

const DockTabs = styled.div`
  display: flex;
  flex: none;
  align-items: flex-end;
  height: 31px;
  border-bottom: 1px solid #b4b4b4;
`

const DockTab = styled.button`
  height: ${({ $active }) => ($active ? "31px" : "28px")};
  margin-bottom: ${({ $active }) => ($active ? "-1px" : "0")};
  padding: 0 ${({ $active }) => ($active ? "12px 0 7px" : "12px")};
  border: solid #b4b4b4;
  border-width: 1px 1px 0 0;
  border-radius: 0 3px 0 0;
  background: ${({ $active }) => ($active ? "linear-gradient(#fafafa, #eeeeee)" : "#dcdcdc")};
  color: ${({ $active }) => ($active ? "inherit" : "#333333")};
`

const Actions = styled.div`
  display: grid;
  grid-template-columns: repeat(4, 1fr);
  align-items: center;
  gap: 2px;
  flex: none;
  padding: 9px 9px 6px 3px;
`

const ActionButton = styled.button`
  ${raised}
  display: flex;
  align-items: center;
  justify-content: center;
  gap: 4px;
  height: ${({ $short }) => ($short ? "24px" : "27px")};
  padding: 0;
  border-color: ${({ disabled }) => (disabled ? "#cccccc" : "#b0b0b0")};
  color: ${({ disabled }) => (disabled ? "#b9b9b9" : "inherit")};
`

const HelpMark = styled.span`
  color: #8fbf74;
  font-size: 18px;
  font-weight: 600;
`

const SearchRow = styled.div`
  display: flex;
  flex: none;
  align-items: center;
  gap: 2px;
  padding: 0 9px 6px 3px;
`

const GearButton = styled.button`
  display: flex;
  align-items: center;
  justify-content: center;
  width: 24px;
  height: 23px;
  padding: 0;
  border: 1px solid #bdbdbd;
  border-radius: 3px;
  background: #dedede;
`

const ScrollArea = styled.div`
  display: flex;
  flex: none;
  height: 389px;
  padding: 0 9px 0 3px;
`

const Form = styled.form`
  display: flex;
  flex: 1;
  flex-direction: column;
  min-width: 0;
  overflow: hidden;
`

const ScrollBar = styled.div`
  display: flex;
  flex-direction: column;
  width: 14px;
  border-left: 1px solid #b9b9b9;
  background: #e3e3e3;

  button {
    display: flex;
    flex: none;
    align-items: center;
    justify-content: center;
    height: 14px;
    padding: 0;
    border: 0;
    background: #f4f4f4;
  }
`

const Thumb = styled.div`
  height: 46px;
  margin-bottom: auto;
  border: solid #b9b9b9;
  border-width: 1px 0;
  background: #fafafa;
`

const SectionHead = styled.div`
  display: flex;
  align-items: center;
  gap: 4px;
  margin-bottom: 6px;
`

const SectionTitle = styled.button`
  display: flex;
  flex: 1;
  align-items: center;
  gap: 7px;
  min-width: 0;
  height: 29px;
  padding: 0 2px 0 10px;
  border: 1px solid #b4b4b4;
  background: #ebebeb;
  font-size: 15px;
  font-weight: 700;

  i {
    flex: none;
    width: 14px;
    height: 4px;
    background: #2f8fcb;
  }

  span {
    white-space: nowrap;
  }
`

const SquareButton = styled.button`
  ${raised}
  display: flex;
  flex: none;
  align-items: center;
  justify-content: center;
  width: ${({ $small }) => ($small ? "24px" : "28px")};
  height: ${({ $small }) => ($small ? "23px" : "24px")};
  padding: 0;
`

const Field = styled.div`
  display: flex;
  align-items: center;
  height: 27px;
  margin-bottom: ${({ $gap }) => $gap}px;

  label {
    flex: none;
    width: 133px;
  }
`

const Checks = styled.div`
  display: flex;
  flex-direction: column;
  gap: 9px;
  padding: 1px 0 6px;
`

const Check = styled.label`
  display: flex;
  align-items: center;
  gap: 5px;
  height: 20px;

  input {
    width: 14px;
    height: 14px;
    appearance: none;
    border: 1px solid #b8b8b8;
    background: #ffffff;
  }

  input:checked {
    background: #308cc6;
  }
`

const IconLine = styled.div`
  display: flex;
  justify-content: flex-end;
`

const Keys = styled.div`
  display: grid;
  grid-template-columns: repeat(6, 1fr);
`

const Key = styled.button`
  ${raised}
  display: flex;
  align-items: center;
  justify-content: center;
  grid-column: span ${({ $span }) => $span || 1};
  height: 26px;
  padding: 0 ${({ $span }) => ($span ? "4px" : "0")};

  b {
    flex: 1;
    font-weight: 400;
  }
`

const treeRows = [
  { name: "builtin:", depth: 0, icon: "server" },
  { name: "tmpcyza3hjw.med", depth: 0, eye: true },
  { name: "ExtractGroup1", depth: 0, eye: true },
  { name: "LINES", depth: 1, eye: true },
  { name: "POINTS", depth: 1, eye: true },
  { name: "SET GLYPH SIZE", depth: 1, eye: true, box: true },
  { name: "CUT_AXE_X", depth: 2, eye: true },
  { name: "CUT_AXE_Y", depth: 2, eye: true },
  { name: "CUT_AXE_Z", depth: 2, eye: true },
  { name: "CUT_DEPL_DX", depth: 2, eye: true },
  { name: "CUT_DEPL_DY", depth: 2, eye: true },
  { name: "CUT_DEPL_DZ", depth: 2, eye: true },
  { name: "CUT_DEPL_DRX", depth: 2, eye: true },
  { name: "CUT_DEPL_DRY", depth: 2, eye: true },
  { name: "CUT_DEPL_DRZ", depth: 2, eye: true, end: true },
]

function Guides({ depth, box, end }) {
  return (
    <Svg width={depth * 18} height="19" stroke="#808080" fill="none">
      <path d={`M${depth * 18 - 8.5} -2v${box || end ? 12 : 23}M${depth * 18 - 9} 9.5h9`} />
      {box && <path d="M5.500 5.500h8v8h-8zM7 9.500h5" fill="#fff" />}
    </Svg>
  )
}

function PipelineBrowser() {
  const [selected, setSelected] = useState("CUT_DEPL_DX")
  return (
    <>
      <DockTitle>
        <h2>Pipeline Browser</h2>
        <TinyButton aria-label="Float"><Icon name="float" size={12} /></TinyButton>
        <TinyButton aria-label="Close"><Icon name="close" size={12} /></TinyButton>
      </DockTitle>
      <Tree>
        {treeRows.map(({ name, depth, icon, eye, box, end }) => (
          <TreeRow key={name}>
            <EyeButton aria-label={`Visibility of ${name}`}>
              {eye && <Icon name={name === "CUT_DEPL_DX" ? "eyeOpen" : "eyeShut"} size={12} />}
            </EyeButton>
            <TreeItem $selected={selected === name} $large={depth > 0} onClick={() => setSelected(name)}>
              {depth > 0 && <Guides depth={depth} box={box} end={end} />}
              <TreeIcon><Icon name={icon || "cube"} size={15} /></TreeIcon>
              {name}
            </TreeItem>
          </TreeRow>
        ))}
      </Tree>
    </>
  )
}

const keys = [
  "Clear", "(", ")", "iHat", "jHat", "kHat",
  "sin", "cos", "tan", "abs", "sqrt", "+",
  "asin", "acos", "atan", "ceil", "floor", "-",
  "sinh", "cosh", "tanh", "x^y", "exp", "*",
  "dot", "mag", "norm", "ln", "log10", "/",
]

function Properties() {
  return (
    <>
      <Splitter />
      <DockTabs role="tablist">
        <DockTab role="tab" aria-selected="true" $active>Properties</DockTab>
        <DockTab role="tab" aria-selected="false">Information</DockTab>
      </DockTabs>
      <DockTitle>
        <h2>Properties</h2>
        <TinyButton aria-label="Float"><Icon name="float" size={12} /></TinyButton>
        <TinyButton aria-label="Close"><Icon name="close" size={12} /></TinyButton>
      </DockTitle>
      <Actions>
        <ActionButton disabled><Icon name="cubes" size={13} />Apply</ActionButton>
        <ActionButton disabled><Icon name="forbid" size={14} />Reset</ActionButton>
        <ActionButton><Icon name="cross" size={13} />Delete</ActionButton>
        <ActionButton $short><HelpMark>?</HelpMark></ActionButton>
      </Actions>
      <SearchRow>
        <TextInput aria-label="Search" placeholder="Search ... (use Esc to clear text)" />
        <GearButton aria-label="Advanced"><Icon name="gear" size={16} /></GearButton>
      </SearchRow>
      <ScrollArea>
        <Form>
          <SectionHead>
            <SectionTitle type="button"><i /><span>Properties (CUT_DEPL_DX</span></SectionTitle>
            {["copyGrey", "pasteGrey", "reload", "saveBlue"].map((name) => (
              <SquareButton key={name} type="button" aria-label={name}><Icon name={name} size={15} /></SquareButton>
            ))}
          </SectionHead>
          <Field $gap={6}>
            <label htmlFor="attribute">Attribute Type</label>
            <Picker id="attribute" icon="dot" value="Point Data" iconSize={18} grow />
          </Field>
          <Checks>
            {["Coordinate Results", "Result Normals", "Result TCoords"].map((name) => (
              <Check key={name}><input type="checkbox" />{name}</Check>
            ))}
          </Checks>
          <Field $gap={4}>
            <label htmlFor="array-name">Result Array Name</label>
            <TextInput id="array-name" defaultValue="CUT_DEPL_DX" $large />
          </Field>
          <Field $gap={2}>
            <TextInput aria-label="Expression" defaultValue="CUT_DEPL_DX" $tall $large />
          </Field>
          <IconLine>
            {["heart", "saveState", "gear"].map((name) => (
              <SquareButton key={name} type="button" aria-label={name} $small><Icon name={name} size={15} /></SquareButton>
            ))}
          </IconLine>
          <Keys>
            {keys.map((key) => <Key key={key} type="button">{key}</Key>)}
            <Key type="button" $span={3}><b>Scalars</b><Triangle /></Key>
            <Key type="button" $span={3}><b>Vectors</b><Triangle /></Key>
          </Keys>
        </Form>
        <ScrollBar>
          <button type="button" aria-label="Scroll up"><Triangle $up /></button>
          <Thumb />
          <button type="button" aria-label="Scroll down"><Triangle /></button>
        </ScrollBar>
      </ScrollArea>
    </>
  )
}

/* ---------- render area ---------- */

const Frame = styled.section`
  display: flex;
  flex: 1;
  flex-direction: column;
  min-width: 0;
  margin-right: -3px;
  padding: 1px 0 0 1px;
  border: solid #9c9c9c;
  border-width: 2px 0 0 2px;
`

const FrameTitle = styled.header`
  display: flex;
  align-items: center;
  gap: 6px;
  height: 31px;

  h1 {
    flex: 1;
    height: 31px;
    margin: 0;
    border: 1px solid #a8a8a8;
    border-bottom: 0;
    border-radius: 3px 3px 0 0;
    background: linear-gradient(#fafafa, #eeeeee);
    color: #1d7fc0;
    font: inherit;
    line-height: 28px;
    text-align: center;
  }
`

const CloseButton = styled.button`
  ${raised}
  display: flex;
  align-items: center;
  justify-content: center;
  width: 17px;
  height: 17px;
  padding: 0;
`

const LayoutTabs = styled.div`
  display: flex;
  align-items: flex-end;
  height: 30px;
  border-bottom: 1px solid #a8a8a8;
`

const LayoutTab = styled.button`
  display: flex;
  align-items: center;
  gap: 4px;
  height: ${({ $active }) => ($active ? "30px" : "28px")};
  margin-bottom: ${({ $active }) => ($active ? "-1px" : "0")};
  padding: 0 ${({ $active }) => ($active ? "10px" : "11px")};
  border: 1px solid #b4b4b4;
  border-bottom: 0;
  border-radius: 3px 3px 0 0;
  background: ${({ $active }) => ($active ? "#fcfcfc" : "#e4e4e4")};
`

const ViewBar = styled.div`
  display: flex;
  align-items: center;
  height: 27px;

  strong {
    margin-left: auto;
    margin-right: 10px;
    text-decoration: underline;
    text-underline-offset: 3px;
  }
`

const ViewTool = styled.button`
  display: flex;
  flex: none;
  justify-content: center;
  width: 26px;
  padding: 0;
  border: 0;
  background: none;
`

const ViewButton = styled.button`
  ${raised}
  display: flex;
  align-items: center;
  justify-content: center;
  width: 26px;
  height: 25px;
  margin-left: 1px;
  padding: 0;
`

const View = styled.div`
  position: relative;
  display: flex;
  flex: 1;
  align-items: center;
  justify-content: center;
  min-height: 0;
  margin-left: 2px;
  border: 2px solid #0000ff;
  border-bottom: 0;
  background: #ffffff;
  font: 15px/16px "Liberation Sans", Arial, sans-serif;
`

const Beam = styled.div`
  display: flex;
  flex-direction: column;
  width: 10px;
  height: 904px;
  max-height: 83%;
`

const BeamPart = styled.span`
  flex: 1;
  background: linear-gradient(90deg, #00000066, transparent 30% 75%, #00000055) ${({ $color }) => $color};
`

const Triad = styled.svg`
  position: absolute;
  left: 129px;
  bottom: 122px;
`

const Legend = styled.div`
  position: absolute;
  right: 9px;
  bottom: 3px;
  display: flex;
  align-items: center;
  gap: 4px;
`

const Scale = styled.div`
  display: flex;
  height: 783px;
`

const ScaleLabels = styled.ol`
  display: flex;
  flex-direction: column;
  justify-content: space-between;
  margin: 0;
  padding: 0;
  list-style: none;

  li {
    display: flex;
    align-items: center;
    justify-content: flex-end;
    gap: 8px;
    height: 16px;
  }

  li:first-child, li:last-child {
    gap: 1px;
  }

  li::after {
    content: "";
    width: 8px;
    height: 1px;
    background: #000000;
  }
`

const ScaleBar = styled.div`
  display: flex;
  flex-direction: column;
  width: 16px;
  margin: 8px 0;
`

const Swatch = styled.span`
  flex: 1;
  background: ${({ $color }) => $color};
`

const LegendTitle = styled.span`
  writing-mode: vertical-rl;
  transform: rotate(180deg);
`

const beamColors = ["#5e0000", "#931900", "#b43b0b", "#c77122", "#bd9c2d", "#97ba29", "#62c544", "#20b87d", "#1b9aab", "#356fc3", "#344096", "#250e2d"]
const scaleColors = ["#7a0403", "#c02302", "#ea4f0d", "#fe922a", "#f2c93a", "#c1f334", "#7dff56", "#29efa2", "#22c8df", "#4490fe", "#4454c4", "#30123b"]
const scaleLabels = ["1.5e+01", "14.8", "14.7", "14.5", "14.3", "14.2", "14.0", "13.8", "13.7", "13.5", "13.3", "13.2", "1.3e+01"]

const viewTools = [
  ["camUndo", "camRedo"],
  ["camera"],
  ["threeD", "camEdit"],
  ["selPlus", "selMinus", "selToggle"],
  ["selCells", "selPoints", "frustum", "frustumPts", "polyCells", "polyPts", "selBlock", "greyBox", "hoverPt", "hoverCell", "hoverPts", "askCell", "askPt", "grow", "shrink", "clearSel"],
]

function RenderArea() {
  return (
    <Frame>
      <FrameTitle>
        <h1>ParaView scene:1 - viewer:1</h1>
        <CloseButton aria-label="Close viewer"><Icon name="close" size={12} /></CloseButton>
      </FrameTitle>
      <LayoutTabs role="tablist">
        <LayoutTab role="tab" aria-selected="true" $active>
          <Icon name="windowBox" size={17} />Layout #1<Icon name="close" size={12} />
        </LayoutTab>
        <LayoutTab role="tab" aria-selected="false">+</LayoutTab>
      </LayoutTabs>
      <ViewBar>
        {viewTools.map((group, i) => [
          i > 0 && <Separator key={`sep-${i}`} />,
          ...group.map((name) => (
            <ViewTool key={name} aria-label={name}><Icon name={name} size={17} /></ViewTool>
          )),
        ])}
        <strong>RenderView1</strong>
        <ViewButton aria-label="Split horizontally"><Icon name="splitH" size={15} /></ViewButton>
        <ViewButton aria-label="Split vertically"><Icon name="splitV" size={15} /></ViewButton>
        <ViewButton aria-label="Maximize"><Icon name="windowBox" size={18} /></ViewButton>
        <ViewButton aria-label="Close view"><Icon name="close" size={12} /></ViewButton>
      </ViewBar>
      <View>
        <Beam>{beamColors.map((color) => <BeamPart key={color} $color={color} />)}</Beam>
        <Triad width="94" height="92" fontSize="22">
          <path d="M9 78V18" stroke="#e8e800" />
          <path d="M9 78h62" stroke="#e81818" />
          <path d="M9 4l6 13q-6 3-12 0z" fill="#dede10" stroke="#77770a" strokeWidth=".6" />
          <path d="M85 78l-14-6q-3 6 0 12z" fill="#dd0a0a" stroke="#700" strokeWidth=".6" />
          <circle cx="9" cy="78" r="7" fill="#006000" />
          <text x="12" y="18">Y</text>
          <text x="14" y="78">Z</text>
          <text x="73" y="79">X</text>
        </Triad>
        <Legend>
          <Scale>
            <ScaleLabels>{scaleLabels.map((label) => <li key={label}>{label}</li>)}</ScaleLabels>
            <ScaleBar>{scaleColors.map((color) => <Swatch key={color} $color={color} />)}</ScaleBar>
          </Scale>
          <LegendTitle>CUT_DEPL_DX</LegendTitle>
        </Legend>
      </View>
    </Frame>
  )
}

function Logo() {
  return (
    <Brand>
      <Svg width="150" height="28" aria-label="salome MECA">
        <text x="0" y="19" fontFamily="Open Sans" fontSize="25" fontWeight="700" fill="#1f5fc9">salome</text>
        <text x="94" y="19" fontFamily="Open Sans" fontSize="19" fill="#2f66c6">MECA</text>
        <g fill="#fb8a24">
          <circle cx="28" cy="25" r="2" fill="#f4572c" />
          <rect x="38" y="24" width="14" height="3" />
          <circle cx="58" cy="25" r="2" />
          <circle cx="67" cy="25" r="2" />
        </g>
        <g fill="#fbb021">
          <circle cx="79" cy="25" r="2" />
          <circle cx="88" cy="25" r="2" />
          <rect x="94" y="24" width="14" height="3" />
          <circle cx="114" cy="25" r="2" />
        </g>
      </Svg>
    </Brand>
  )
}

const menus = ["File", "Edit", "View", "Tools", "Sources", "Filters", "Macros", "Tools", "Window", "Catalyst", "Help"]
const modules = ["shaper", "geom", "mesh", "bars", "sigma", "pi", "eos", "helmet", "signal", "pipe", "mt", "lx", "gv", "seal", "nodes", "blocks", "globe", "eficas", "da", "greenCube", "lobster", "phone", "beam", "beams", "steps"]

export default function App() {
  return (
    <Shell>
      <GlobalStyle />
      <Gradients />
      <MenuBar>
        {menus.map((menu, i) => <MenuItem key={i} $plain={menu === "Catalyst"}>{menu}</MenuItem>)}
        <Logo />
      </MenuBar>

      <ToolBar>
        <Handle $edge />
        <Tools wide names={["page", "open", "save"]} />
        <Separator />
        <Tools wide names={["copy", "paste"]} />
        <Handle />
        <Picker label="Module" icon="bars" value="ParaViS" width="162px" iconSize={17} />
        <Separator />
        <Tools wide names={modules} on="bars" />
        <Handle />
        <Tools names={["load", "saveState", "download", "capture", "flask"]} />
        <Separator />
        <Tools names={["connect", "disconnect", "history"]} />
        <Separator />
        <Tools names={["undo", "redo"]} />
        <Separator />
        <Tools names={["extract", "gradientPick", "palette"]} />
        <Handle />
        <Tools names={["first", "prev", "back", "play", "next", "last", "loop"]} />
        <Handle />
        <TimeLabel htmlFor="time">Time:</TimeLabel>
        <TextInput id="time" defaultValue="0" $width="125px" />
        <Spinner>
          <input aria-label="Time step" defaultValue="0" disabled />
          <div><Triangle $up $muted /><Triangle $muted /></div>
        </Spinner>
      </ToolBar>

      <ToolBar>
        <Handle $edge />
        <Tools names={["legend", "editMap", "unlink", "range", "rangeC", "rangeT", "rangeEye"]} on="legend" />
        <Picker label="Colour by" icon="dot" value="CUT_DEPL_DX" width="181px" iconSize={18} gap large />
        <Picker label="Component" value="" width="78px" off />
        <Handle />
        <Picker label="Representation" value="Wireframe" width="183px" />
        <Handle />
        <Tools names={["fit", "fitData", "closest", "closestData", "zoomBox", "plusX", "minusX", "plusY", "minusY", "plusZ", "minusZ", "iso", "rotPlus", "rotMinus"]} />
        <Handle />
        <Tools names={["axesEye", "center", "resetCenter", "pickCenter"]} on="axesEye" />
        <Handle />
        {["annotate_groups", "rosetteCustomViews", "ShowSalomeObject", "macr_lign_coupe"].map((name) => (
          <MacroButton key={name}>{name}</MacroButton>
        ))}
      </ToolBar>

      <ToolBar>
        <Handle $edge />
        <Tools names={["calc", "contour", "clip", "slice", "threshold", "subset", "glyph", "stream", "warp", "group", "extractLevel"]} />
        <Handle />
        <Tools names={["translate", "oval", "squares", "timeBall", "plotLine", "timePick", "ice"]} />
        <Handle />
        <Tools names={["ruler"]} />
      </ToolBar>

      <Main>
        <Dock>
          <PipelineBrowser />
          <Properties />
        </Dock>
        <RenderArea />
      </Main>
    </Shell>
  )
}
